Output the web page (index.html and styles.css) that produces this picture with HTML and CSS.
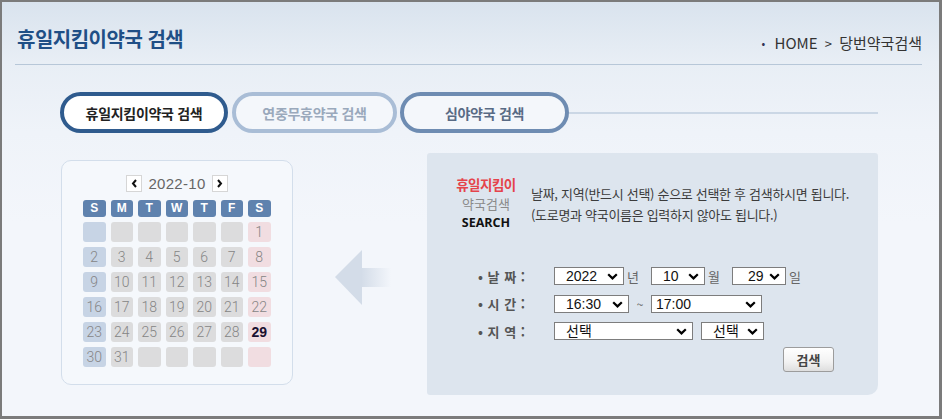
FILE: index.html
```html
<!DOCTYPE html>
<html lang="ko">
<head>
<meta charset="utf-8">
<title>휴일지킴이약국 검색</title>
<link rel="stylesheet" href="styles.css">
</head>
<body>
<div class="frame">
  <header class="header">
    <h1 class="title">휴일지킴이약국 검색</h1>
    <div class="crumb"><span class="dot">•</span> HOME <span class="gt">&gt;</span> 당번약국검색</div>
  </header>

  <nav class="tabs">
    <a class="tab tab-active">휴일지킴이약국 검색</a>
    <a class="tab tab-light">연중무휴약국 검색</a>
    <a class="tab tab-mid">심야약국 검색</a>
    <span class="tab-line"></span>
  </nav>

  <main class="main">
    <section class="cal">
      <div class="cal-head">
        <span class="nav-btn"><svg width="7" height="9" viewBox="0 0 7 9"><path d="M5 1 L2 4.5 L5 8" fill="none" stroke="#111" stroke-width="2"/></svg></span>
        <span class="ym">2022-10</span>
        <span class="nav-btn"><svg width="7" height="9" viewBox="0 0 7 9"><path d="M2 1 L5 4.5 L2 8" fill="none" stroke="#111" stroke-width="2"/></svg></span>
      </div>
      <div class="grid">
        <span class="dh">S</span><span class="dh">M</span><span class="dh">T</span><span class="dh">W</span><span class="dh">T</span><span class="dh">F</span><span class="dh">S</span>
        <span class="d sun"></span><span class="d"></span><span class="d"></span><span class="d"></span><span class="d"></span><span class="d"></span><span class="d sat">1</span>
        <span class="d sun">2</span><span class="d">3</span><span class="d">4</span><span class="d">5</span><span class="d">6</span><span class="d">7</span><span class="d sat">8</span>
        <span class="d sun">9</span><span class="d">10</span><span class="d">11</span><span class="d">12</span><span class="d">13</span><span class="d">14</span><span class="d sat">15</span>
        <span class="d sun">16</span><span class="d">17</span><span class="d">18</span><span class="d">19</span><span class="d">20</span><span class="d">21</span><span class="d sat">22</span>
        <span class="d sun">23</span><span class="d">24</span><span class="d">25</span><span class="d">26</span><span class="d">27</span><span class="d">28</span><span class="d sat today">29</span>
        <span class="d sun">30</span><span class="d">31</span><span class="d"></span><span class="d"></span><span class="d"></span><span class="d"></span><span class="d sat"></span>
      </div>
    </section>

    <div class="arrow-zone">
      <svg width="56" height="56" viewBox="0 0 56 56">
        <defs>
          <linearGradient id="shaft" x1="0" y1="0" x2="1" y2="0">
            <stop offset="0" stop-color="#d3dce8"/>
            <stop offset="1" stop-color="#d3dce8" stop-opacity="0"/>
          </linearGradient>
        </defs>
        <path d="M0 27 L27 0 L27 55 Z" fill="#d3dce8"/>
        <rect x="26" y="18" width="30" height="19" fill="url(#shaft)"/>
      </svg>
    </div>

    <section class="panel">
      <div class="intro">
        <div class="intro-tag">
          <div class="tag-red">휴일지킴이</div>
          <div class="tag-gray">약국검색</div>
          <div class="tag-black">SEARCH</div>
        </div>
        <div class="intro-desc">
          <p>날짜, 지역(반드시 선택) 순으로 선택한 후 검색하시면 됩니다.</p>
          <p>(도로명과 약국이름은 입력하지 않아도 됩니다.)</p>
        </div>
      </div>

      <form class="form">
        <div class="row">
          <span class="lbl">• 날 짜 :</span>
          <span class="sel w-year"><select><option>2022</option></select><svg class="chev" width="11" height="7" viewBox="0 0 11 7"><path d="M1.2 1.2 L5.5 5.4 L9.8 1.2" fill="none" stroke="#000" stroke-width="2.2"/></svg></span>
          <span class="unit">년</span>
          <span class="sel w-md"><select><option>10</option></select><svg class="chev" width="11" height="7" viewBox="0 0 11 7"><path d="M1.2 1.2 L5.5 5.4 L9.8 1.2" fill="none" stroke="#000" stroke-width="2.2"/></svg></span>
          <span class="unit">월</span>
          <span class="sel w-md"><select class="pl-day"><option>29</option></select><svg class="chev" width="11" height="7" viewBox="0 0 11 7"><path d="M1.2 1.2 L5.5 5.4 L9.8 1.2" fill="none" stroke="#000" stroke-width="2.2"/></svg></span>
          <span class="unit">일</span>
        </div>
        <div class="row">
          <span class="lbl">• 시 간 :</span>
          <span class="sel w-time"><select><option>16:30</option></select><svg class="chev" width="11" height="7" viewBox="0 0 11 7"><path d="M1.2 1.2 L5.5 5.4 L9.8 1.2" fill="none" stroke="#000" stroke-width="2.2"/></svg></span>
          <span class="tilde">~</span>
          <span class="sel w-time2"><select class="pl-sm"><option>17:00</option></select><svg class="chev" width="11" height="7" viewBox="0 0 11 7"><path d="M1.2 1.2 L5.5 5.4 L9.8 1.2" fill="none" stroke="#000" stroke-width="2.2"/></svg></span>
        </div>
        <div class="row">
          <span class="lbl">• 지 역 :</span>
          <span class="sel w-area"><select><option>선택</option></select><svg class="chev" width="11" height="7" viewBox="0 0 11 7"><path d="M1.2 1.2 L5.5 5.4 L9.8 1.2" fill="none" stroke="#000" stroke-width="2.2"/></svg></span>
          <span class="sel w-area2"><select><option>선택</option></select><svg class="chev" width="11" height="7" viewBox="0 0 11 7"><path d="M1.2 1.2 L5.5 5.4 L9.8 1.2" fill="none" stroke="#000" stroke-width="2.2"/></svg></span>
        </div>
        <div class="btn-row">
          <button type="button" class="btn">검색</button>
        </div>
      </form>
    </section>
  </main>
</div>
</body>
</html>
```

FILE: styles.css
```css
* { box-sizing: border-box; }
html, body { margin: 0; padding: 0; }
body {
  font-family: "Noto Sans CJK KR", "Noto Sans", sans-serif;
  background: #f3f6fb;
}
.frame {
  width: 942px;
  height: 419px;
  border-style: solid;
  border-color: #7b7b7b;
  border-width: 2px 3px 3px 2px;
  background: linear-gradient(180deg, #d9e3ee 0px, #e8eef5 60px, #eff3f9 130px, #f3f6fb 220px);
  overflow: hidden;
}

/* header */
.header {
  display: flex;
  justify-content: space-between;
  align-items: flex-start;
  height: 63px;
  margin: 0 17px 0 13px;
  border-bottom: 1px solid #b7c7d8;
}
.title {
  margin: 0;
  padding: 25px 0 0 2px;
  font-size: 20px;
  line-height: 24px;
  font-weight: 700;
  color: #1f4f86;
  letter-spacing: -0.5px;
}
.crumb {
  padding: 31px 0 0 0;
  line-height: 20px;
  font-size: 15px;
  color: #333;
}
.crumb .dot { color: #335; font-size: 11px; margin-right: 5px; vertical-align: 1px; }
.crumb .gt { margin: 0 3px; font-size: 13px; }

/* tabs */
.tabs {
  display: flex;
  align-items: center;
  margin: 27px 61px 0 58px;
  height: 41px;
}
.tab {
  display: flex;
  align-items: center;
  justify-content: center;
  height: 41px;
  border-radius: 21px;
  border: 4px solid;
  font-size: 14px;
  font-weight: 700;
  background: #ffffff;
  letter-spacing: -0.3px;
}
.tab-active { width: 168px; border-color: #2f5b8e; color: #222; }
.tab-light { width: 165px; margin-left: 4px; border-color: #a9bdd6; color: #9aa9bc; background: #f4f7fb; }
.tab-mid { width: 169px; margin-left: 3px; border-color: #6e8cb2; color: #596b85; background: #f4f7fb; }
.tab-line { flex: 1; height: 2px; background: #cbd7e5; }

/* main */
.main {
  display: flex;
  align-items: flex-start;
  margin-top: 20px;
}

/* calendar */
.cal {
  width: 232px;
  height: 225px;
  margin: 7px 0 0 59px;
  padding: 14px 21px 0 21px;
  background: #f5f8fc;
  border: 1px solid #d3deeb;
  border-radius: 10px;
}
.cal-head {
  display: flex;
  justify-content: center;
  align-items: center;
  gap: 4px;
  height: 17px;
  margin-bottom: 8px;
}
.nav-btn {
  width: 16px;
  height: 17px;
  display: flex;
  align-items: center;
  justify-content: center;
  background: #fff;
  border: 1px solid #d6d6d6;
}
.ym {
  font-family: "Liberation Sans", sans-serif;
  font-size: 15px;
  color: #666;
  padding: 0 2px;
  letter-spacing: 0.3px;
}
.grid {
  display: grid;
  grid-template-columns: repeat(7, 22.5px);
  grid-template-rows: 17px repeat(6, 20px);
  column-gap: 5px;
  row-gap: 5px;
}
.dh {
  height: 17px;
  background: #5f82ae;
  border-radius: 3px;
  color: #fff;
  font-family: "Liberation Sans", sans-serif;
  font-weight: 700;
  font-size: 12px;
  line-height: 17px;
  text-align: center;
}
.d {
  height: 20px;
  background: #dcdcdd;
  border-radius: 3px;
  color: #858585;
  font-family: "Roboto", "Liberation Sans", sans-serif;
  font-weight: 300;
  font-size: 14px;
  line-height: 21px;
  text-align: center;
}
.d.sun { background: #c7d4e5; }
.d.sat { background: #f1dde1; }
.d.today { color: #1b1030; font-weight: 700; font-family: "Liberation Sans", sans-serif; }

/* arrow */
.arrow-zone {
  width: 134px;
  height: 160px;
  padding: 97px 0 0 42px;
}
.arrow-zone svg { display: block; }

/* panel */
.panel {
  width: 451px;
  height: 242px;
  background: #dde5ee;
  border-radius: 3px 3px 10px 3px;
}
.intro {
  display: flex;
  padding: 22px 0 0 19px;
}
.intro-tag {
  width: 80px;
  text-align: center;
  line-height: 19px;
}
.tag-red { color: #e5434b; font-weight: 700; font-size: 13.5px; letter-spacing: -0.5px; }
.tag-gray { color: #8a8a8a; font-size: 13px; }
.tag-black { color: #111; font-weight: 700; font-size: 12.5px; font-family: "Open Sans", "Noto Sans", sans-serif; }
.intro-desc {
  margin: 8px 0 0 5px;
  font-size: 13px;
  color: #3c3c3c;
  line-height: 21px;
  letter-spacing: -0.3px;
}
.intro-desc p { margin: 0; }

/* form */
.form {
  margin-top: 35px;
  padding-left: 51px;
  display: flex;
  flex-direction: column;
  gap: 9.5px;
}
.row {
  display: flex;
  align-items: center;
  height: 18px;
}
.lbl {
  width: 76px;
  font-size: 13px;
  font-weight: 700;
  color: #555;
  letter-spacing: 0.5px;
}
.sel {
  position: relative;
  display: inline-block;
  height: 18px;
}
.sel select {
  -webkit-appearance: none;
  appearance: none;
  display: block;
  width: 100%;
  height: 18px;
  margin: 0;
  padding: 0 0 0 11px;
  border: 1px solid #7d7d7d;
  border-radius: 0;
  background: #fff;
  font-family: "Liberation Sans", "Noto Sans CJK KR", sans-serif;
  font-size: 14px;
  line-height: 16px;
  color: #111;
}
.sel select.pl-day { padding-left: 15px; }
.sel select.pl-sm { padding-left: 4px; }
.chev {
  position: absolute;
  right: 6px;
  top: 6px;
  pointer-events: none;
}
.w-year { width: 70px; }
.w-md { width: 54px; }
.w-time { width: 75px; }
.w-time2 { width: 111px; }
.w-area { width: 139px; margin-right: 8px; }
.w-area2 { width: 63px; }
.unit {
  width: 13px;
  margin: 0 11px 0 3px;
  font-size: 13px;
  color: #666;
}
.tilde {
  width: 22px;
  text-align: center;
  font-size: 12px;
  color: #666;
}
.btn-row {
  display: flex;
  justify-content: flex-end;
  padding-right: 44px;
  margin-top: -2.5px;
}
.btn {
  width: 51px;
  height: 25px;
  padding: 0;
  border: 1px solid #9c9c9c;
  border-radius: 3px;
  background: linear-gradient(180deg, #ffffff 0%, #f2f2f2 60%, #dedede 100%);
  font-family: "Noto Sans CJK KR", sans-serif;
  font-size: 13px;
  font-weight: 700;
  color: #444;
}
```
